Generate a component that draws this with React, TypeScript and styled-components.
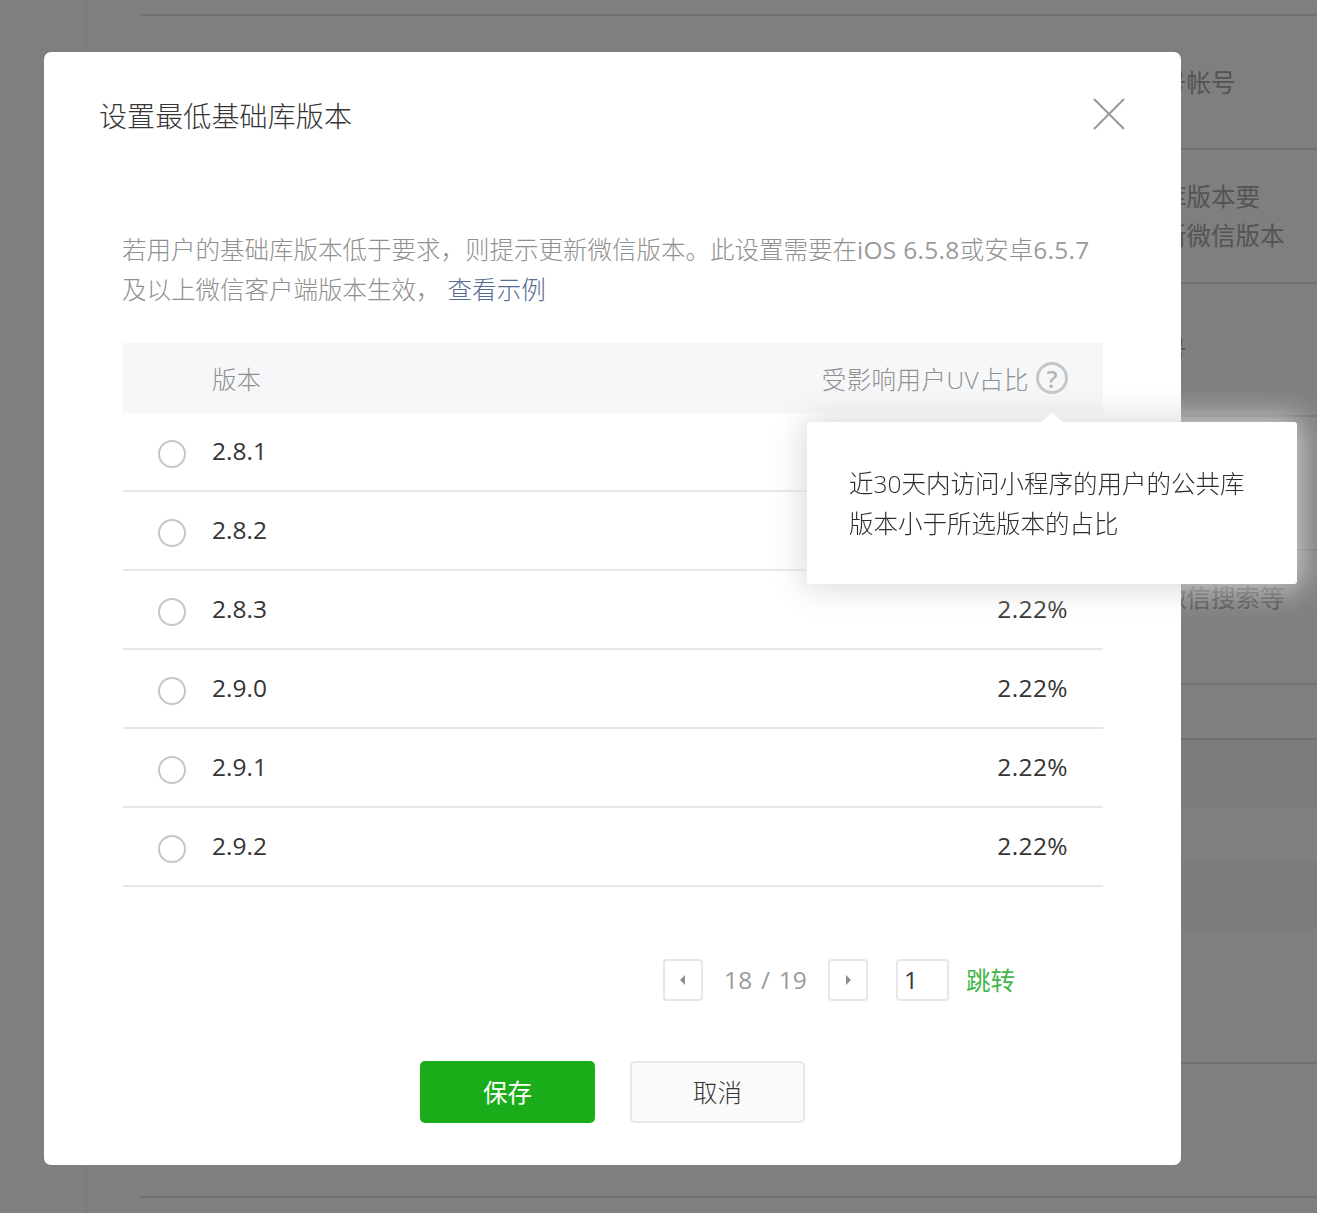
import React from 'react'
import styled, { createGlobalStyle } from 'styled-components'

const GlobalStyle = createGlobalStyle`
  html, body {
    margin: 0;
    padding: 0;
    background: #fefefe;
  }
  body {
    font-family: "Open Sans", "Noto Sans CJK SC", sans-serif;
    font-size: 24.5px;
    color: #353535;
  }
  * {
    box-sizing: border-box;
  }
`

// the first two percentages sit under the tooltip, so they are not drawn
const versions = [
  { name: '2.8.1' },
  { name: '2.8.2' },
  { name: '2.8.3', percent: '2.22%' },
  { name: '2.9.0', percent: '2.22%' },
  { name: '2.9.1', percent: '2.22%' },
  { name: '2.9.2', percent: '2.22%' },
]

const App = () => {
  return (
    <>
      <GlobalStyle />

      {/* Page behind the dialog */}
      <Page>
        <Sidebar />
        <Content>
          <SettingRow $height={16} />
          <SettingRow $height={134}>
            <SettingText>公众号帐号</SettingText>
          </SettingRow>
          <SettingRow $height={134}>
            <SettingText>
              基础库版本要
              <br />
              请更新微信版本
            </SettingText>
          </SettingRow>
          <SettingRow $height={133}>
            <SettingText>公众号</SettingText>
          </SettingRow>
          <SettingRow $height={134} />
          <SettingRow $height={134}>
            <SettingText>
              通过微信搜索等
              <br />
              渠道
            </SettingText>
          </SettingRow>
          <SettingRow $height={55} />
          <Band $height={68} $tint="#f8f8f8" />
          <Band $height={52} $tint="#fefefe" />
          <Band $height={70} $tint="#f6faf8" />
          <SettingRow $height={134} />
          <SettingRow $height={134} />
        </Content>
      </Page>

      <Overlay>
        <Dialog>
          <DialogHeader>
            <DialogTitle>设置最低基础库版本</DialogTitle>
            <CloseButton aria-label="关闭">
              <svg width="32" height="32" viewBox="0 0 32 32" fill="none">
                <path d="M1 1L31 31M31 1L1 31" stroke="#9a9a9a" strokeWidth="2" />
              </svg>
            </CloseButton>
          </DialogHeader>

          <DialogBody>
            <Description>
              若用户的基础库版本低于要求，则提示更新微信版本。此设置需要在<LatinRun>iOS 6.5.8</LatinRun>或安卓
              <LatinRun>6.5.7</LatinRun>
              <br />
              及以上微信客户端版本生效，
              <DemoLink href="#">查看示例</DemoLink>
            </Description>

            <Table>
              <TableHead>
                <span>版本</span>
                <HeadRight>
                  <HeadLabel>受影响用户UV占比</HeadLabel>
                  <HelpIcon>?</HelpIcon>
                </HeadRight>
              </TableHead>
              {versions.map((version) => (
                <TableRow key={version.name}>
                  <Radio />
                  <VersionName>{version.name}</VersionName>
                  {version.percent && <Percent>{version.percent}</Percent>}
                </TableRow>
              ))}
            </Table>

            <Pager>
              <PageButton aria-label="上一页">
                <svg width="6" height="10" viewBox="0 0 6 10">
                  <path d="M5 0V10L0 5Z" fill="#8d8d8d" />
                </svg>
              </PageButton>
              <PageCount>18 / 19</PageCount>
              <PageButton aria-label="下一页">
                <svg width="6" height="10" viewBox="0 0 6 10">
                  <path d="M1 0V10L6 5Z" fill="#8d8d8d" />
                </svg>
              </PageButton>
              <PageInput>1</PageInput>
              <JumpLink href="#">跳转</JumpLink>
            </Pager>
          </DialogBody>

          <DialogFooter>
            <PrimaryButton>保存</PrimaryButton>
            <DefaultButton>取消</DefaultButton>
          </DialogFooter>

          {/* Tooltip of the help icon */}
          <Popover>
            <PopoverArrow />
            近30天内访问小程序的用户的公共库
            <br />
            版本小于所选版本的占比
          </Popover>
        </Dialog>
      </Overlay>
    </>
  )
}

export default App

const Page = styled.div`
  display: flex;
  width: 1317px;
  height: 1213px;
  overflow: hidden;
`

const Sidebar = styled.div`
  width: 87px;
  flex: none;
  border-right: 2px solid #f4f4f4;
`

const Content = styled.div`
  flex: 1;
  display: flex;
  flex-direction: column;
`

const SettingRow = styled.div<{ $height: number }>`
  display: flex;
  align-items: center;
  flex: none;
  height: ${(p) => p.$height}px;
  margin-left: 53px;
  padding-left: 973px;
  border-bottom: 2px solid #e2e2e2;
`

const SettingText = styled.div`
  line-height: 39px;
  color: #a8a8a8;
  white-space: nowrap;
`

const Band = styled.div<{ $height: number; $tint: string }>`
  flex: none;
  height: ${(p) => p.$height}px;
  background: ${(p) => p.$tint};
`

const Overlay = styled.div`
  position: fixed;
  inset: 0;
  padding: 52px 0 0 44px;
  background: rgba(0, 0, 0, 0.5);
`

const Dialog = styled.div`
  position: relative;
  width: 1137px;
  height: 1113px;
  background: #fff;
  border-radius: 7px;
`

const DialogHeader = styled.div`
  display: flex;
  align-items: center;
  justify-content: space-between;
  height: 128px;
  padding: 0 56px 2px 55px;
`

const DialogTitle = styled.h3`
  margin: 0;
  font-size: 28px;
  font-weight: 300;
  letter-spacing: 0.12px;
`

const CloseButton = styled.button`
  display: flex;
  margin-bottom: 2px;
  padding: 0;
  border: 0;
  background: none;
`

const DialogBody = styled.div`
  padding: 50px 78px 0 79px;
`

const Description = styled.p`
  margin: 0 0 33px -1px;
  line-height: 40px;
  font-weight: 300;
  color: #8f8f8f;
  white-space: nowrap;
`

const LatinRun = styled.span`
  font-weight: 400;
  letter-spacing: 0.3px;
  color: #9a9a9a;
`

const DemoLink = styled.a`
  margin-left: 7px;
  letter-spacing: 0.1px;
  color: #576b95;
  text-decoration: none;
`

const Table = styled.div`
  width: 980px;
  font-weight: 300;
`

const TableHead = styled.div`
  display: flex;
  align-items: center;
  justify-content: space-between;
  height: 70px;
  padding: 0 35px 0 89px;
  background: #f6f7f9;
  color: #8f8f8f;
`

const HeadRight = styled.div`
  display: flex;
  align-items: center;
  gap: 7px;
`

const HeadLabel = styled.span`
  letter-spacing: 0.45px;
`

const HelpIcon = styled.span`
  display: flex;
  align-items: center;
  justify-content: center;
  width: 32px;
  height: 32px;
  border: 3px solid #c6c6c6;
  border-radius: 50%;
  font-size: 24px;
  font-weight: 600;
  color: #b4b4b4;
`

const TableRow = styled.div`
  display: flex;
  align-items: center;
  height: 79px;
  padding: 0 35px 2px;
  border-bottom: 2px solid #e7e7eb;
`

const Radio = styled.span`
  flex: none;
  width: 28px;
  height: 28px;
  margin-top: 6px;
  margin-right: 26px;
  border: 2px solid #c6c6cc;
  border-radius: 50%;
`

const VersionName = styled.span`
  flex: 1;
  font-weight: 400;
`

const Percent = styled.span`
  font-weight: 400;
  letter-spacing: 0.4px;
  color: #353535;
`

const Pager = styled.div`
  display: flex;
  align-items: center;
  justify-content: flex-end;
  height: 42px;
  margin-top: 72px;
  padding-right: 88px;
  font-weight: 300;
`

const PageButton = styled.button`
  display: flex;
  align-items: center;
  justify-content: center;
  width: 40px;
  height: 42px;
  padding: 0;
  border: 2px solid #e7e7eb;
  border-radius: 4px;
  background: #fff;
`

const PageCount = styled.span`
  width: 125px;
  padding-bottom: 2px;
  text-align: center;
  font-weight: 400;
  word-spacing: 2px;
  letter-spacing: 0.2px;
  color: #9a9a9a;
`

const PageInput = styled.span`
  display: flex;
  align-items: center;
  width: 53px;
  height: 42px;
  margin: 0 17px 0 28px;
  padding: 0 0 2px 6px;
  border: 2px solid #e7e7eb;
  border-radius: 4px;
  font-weight: 400;
`

const JumpLink = styled.a`
  padding-bottom: 2px;
  font-weight: 400;
  color: #44b549;
  text-decoration: none;
`

const DialogFooter = styled.div`
  display: flex;
  justify-content: center;
  gap: 35px;
  margin-top: 60px;
  font-weight: 300;
`

const PrimaryButton = styled.button`
  width: 175px;
  height: 62px;
  padding: 0 0 2px;
  border: 0;
  border-radius: 5px;
  background: #1aad19;
  color: #fff;
  font: inherit;
  font-weight: 400;
`

const DefaultButton = styled.button`
  width: 175px;
  height: 62px;
  padding: 0 0 2px;
  border: 2px solid #e7e7eb;
  border-radius: 5px;
  background: #fafafa;
  color: #353535;
  font: inherit;
`

const Popover = styled.div`
  position: absolute;
  left: 763px;
  top: 370px;
  width: 490px;
  height: 162px;
  padding: 42px 42px 0;
  border-radius: 3px;
  background: #fff;
  box-shadow: 0 0 32px 4px rgba(216, 216, 216, 0.95);
  line-height: 40px;
  font-weight: 300;
  color: #2e2e2e;
  white-space: nowrap;
`

const PopoverArrow = styled.span`
  position: absolute;
  top: -9px;
  left: 234px;
  width: 0;
  height: 0;
  border-left: 11px solid transparent;
  border-right: 11px solid transparent;
  border-bottom: 9px solid #fff;
`
